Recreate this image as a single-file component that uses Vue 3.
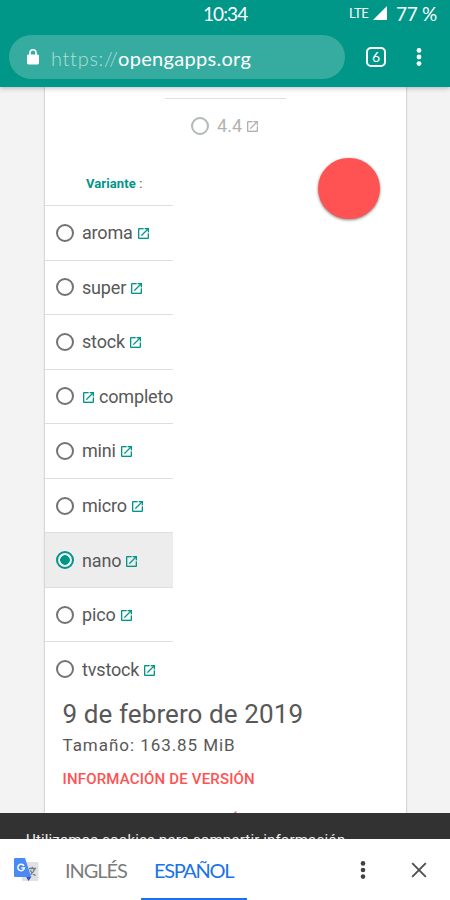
<script setup>
import { h } from 'vue'

const variants = [
  { name: 'aroma' },
  { name: 'super' },
  { name: 'stock' },
  { name: 'completo', iconFirst: true },
  { name: 'mini' },
  { name: 'micro' },
  { name: 'nano', selected: true },
  { name: 'pico' },
  { name: 'tvstock' },
]

const OpenIcon = () =>
  h('svg', { viewBox: '3 3 18 18', width: 11, height: 11, fill: 'currentColor', stroke: 'currentColor', 'stroke-width': 0.3 }, [
    h('path', {
      d: 'M19 19H5V5h7V3H5a2 2 0 0 0-2 2v14a2 2 0 0 0 2 2h14c1.1 0 2-.9 2-2v-7h-2v7zM14 3v2h3.59l-9.83 9.83 1.41 1.41L19 6.41V10h2V3h-7z',
    }),
  ])
</script>

<template>
  <div class="screen">
    <header class="browser">
      <div class="status">
        <span class="clock">10:34</span>
        <span class="lte">LTE</span>
        <svg class="signal" width="14" height="14" viewBox="0 0 14 14"><path d="M14 0v14H0z" fill="#fff" /></svg>
        <span class="battery">77 %</span>
      </div>
      <div class="toolbar">
        <div class="address">
          <svg class="lock" width="12" height="16" viewBox="0 0 12 16">
            <rect x="0" y="5.4" width="12" height="10" rx="1.4" fill="#fff" />
            <path d="M3 6V3.8a3 3 0 0 1 6 0V6" fill="none" stroke="#fff" stroke-width="1.6" />
          </svg>
          <span class="scheme">https://</span><span class="host">opengapps.org</span>
        </div>
        <div class="tabs">6</div>
        <svg class="dots" width="6" height="20" viewBox="0 0 6 20" fill="#fff">
          <circle cx="3" cy="3.4" r="2.4" /><circle cx="3" cy="10" r="2.4" /><circle cx="3" cy="16.6" r="2.4" />
        </svg>
      </div>
    </header>

    <main class="page">
      <section class="card">
        <div class="android">
          <span class="radio"></span>
          <span class="version">4.4</span>
          <OpenIcon />
        </div>
        <div class="variants">
          <div class="heading"><b>Variante</b> :</div>
          <div v-for="v in variants" :key="v.name" class="row" :class="{ selected: v.selected, reversed: v.iconFirst }">
            <span class="radio"></span>
            <span class="name">{{ v.name }}</span>
            <OpenIcon class="link" />
          </div>
        </div>
        <div class="release">
          <h1>9 de febrero de 2019</h1>
          <p>Tamaño: 163.85 MiB</p>
          <a>INFORMACIÓN DE VERSIÓN</a>
          <a class="more">REGISTRO DE VALIDACIÓN</a>
        </div>
        <div class="fab"></div>
      </section>
    </main>

    <div class="cookies">Utilizamos cookies para compartir información</div>

    <footer class="translate">
      <svg class="logo" width="26" height="26" viewBox="0 0 26 26">
        <rect x="9" y="5" width="16.5" height="19" rx="1.2" fill="#dfe1e3" />
        <path d="M13 19.5h5.5L15.5 24z" fill="#3052b8" />
        <path d="M2.2 1H12l6.2 19H2.2A1.2 1.2 0 0 1 1 18.8V2.2A1.2 1.2 0 0 1 2.2 1z" fill="#4a8af4" />
        <path d="M11 8.8A3.3 3.3 0 1 0 11.4 11H8.4" fill="none" stroke="#fff" stroke-width="1.5" />
        <path d="M16 11.5h7M19.3 9.8v1.7M21.7 11.5c-.6 2.8-2.2 4.8-4.3 6.3M17.2 13.3c1 2 3.3 4.4 5.3 5.4" fill="none" stroke="#737a80" stroke-width="1.3" />
      </svg>
      <span class="lang source">INGLÉS</span>
      <span class="lang target">ESPAÑOL</span>
      <svg class="more-dots" width="6" height="20" viewBox="0 0 6 20" fill="#424242">
        <circle cx="3" cy="3.4" r="2.3" /><circle cx="3" cy="10" r="2.3" /><circle cx="3" cy="16.6" r="2.3" />
      </svg>
      <svg class="close" width="16" height="16" viewBox="0 0 16 16">
        <path d="M1.2 1.2l13.6 13.6M14.8 1.2L1.2 14.8" stroke="#505050" stroke-width="1.9" />
      </svg>
    </footer>
  </div>
</template>

<style>
body { margin: 0; overflow: hidden; }
</style>

<style scoped>
.screen {
  width: 450px;
  height: 900px;
  display: flex;
  flex-direction: column;
  overflow: hidden;
  background: #f3f3f3;
  color: #585858;
  font-family: Roboto, sans-serif;
}
svg { display: block; flex: none; }
.browser {
  position: relative;
  z-index: 1;
  flex: none;
  height: 87px;
  background: #009688;
  color: #fff;
  font-family: Lato, sans-serif;
  box-shadow: 0 1px 5px rgba(0, 0, 0, .28);
}
.status {
  height: 35px;
  display: flex;
  padding-left: 203px;
  box-sizing: border-box;
  white-space: nowrap;
}
.clock { width: 146px; font-size: 19px; line-height: 28px; letter-spacing: -.9px; }
.lte { width: 24px; font-size: 13px; line-height: 26px; letter-spacing: -.4px; }
.signal { margin-top: 6px; }
.battery { margin-left: 9px; font-size: 19px; line-height: 28px; letter-spacing: -.3px; }
.toolbar { display: flex; align-items: center; height: 44px; padding-left: 9px; }
.address {
  width: 336px;
  height: 44px;
  box-sizing: border-box;
  padding-left: 18px;
  display: flex;
  align-items: center;
  border-radius: 22px;
  background: #36ab9f;
  font-size: 20px;
  white-space: nowrap;
}
.lock { margin: -1px 12px 0 0; }
.scheme { width: 67px; color: #b0ded9; font-weight: 300; letter-spacing: .7px; padding-top: 2px; }
.host { padding-top: 2px; letter-spacing: .3px; }
.tabs {
  width: 20px;
  height: 20px;
  box-sizing: border-box;
  margin-left: 21px;
  border: 2px solid #fff;
  border-radius: 5px;
  font-size: 14px;
  line-height: 16px;
  text-align: center;
}
.dots { margin-left: 30px; }
.page { flex: none; height: 726px; overflow: hidden; }
.card {
  position: relative;
  width: 361px;
  height: 726px;
  margin-left: 45px;
  background: #fff;
  box-shadow: 0 0 2px rgba(0, 0, 0, .35);
  overflow: hidden;
}
.android {
  display: flex;
  align-items: center;
  width: 121px;
  height: 55px;
  box-sizing: border-box;
  margin: 11px 0 0 120px;
  padding-left: 26px;
  border-top: 1px solid #dfdfdf;
  color: #b2b2b2;
  font-size: 18px;
}
.version { margin: -2px 5px 0 8px; letter-spacing: .1px; }
.radio {
  width: 18px;
  height: 18px;
  flex: none;
  box-sizing: border-box;
  border: 2px solid #737373;
  border-radius: 50%;
}
.android .radio { border-color: #b2b8b6; }
.variants { width: 128px; }
.heading {
  height: 52px;
  line-height: 61px;
  padding-left: 41px;
  box-sizing: border-box;
  font-size: 13px;
  letter-spacing: .1px;
  color: #555;
}
.heading b { color: #009688; font-weight: 700; }
.row {
  display: flex;
  align-items: center;
  gap: 5px;
  height: 54.56px;
  box-sizing: border-box;
  padding-left: 11px;
  border-top: 1px solid #dedede;
  font-size: 18px;
  letter-spacing: -.17px;
}
.row .radio { margin-right: 3px; }
.link { color: #009688; margin-top: 2px; }
.reversed .radio { margin-right: 4px; }
.reversed .link { order: 1; }
.reversed .name { order: 2; }
.selected { background: #ededed; }
.selected .radio {
  border-color: #009688;
  background: radial-gradient(circle, #009688 4.5px, transparent 5px);
}
.release { display: flex; flex-direction: column; padding-left: 17.5px; white-space: nowrap; }
h1 { margin: 1px 0 0; font-size: 26px; line-height: 34px; font-weight: 400; letter-spacing: .1px; }
p { margin: 0; font-size: 17px; line-height: 28px; letter-spacing: .95px; }
a { margin-top: 9px; font-size: 15px; line-height: 22px; letter-spacing: .17px; font-weight: 500; color: #ff5252; }
.more { margin-top: 19px; letter-spacing: .3px; }
.fab {
  position: absolute;
  left: 273px;
  top: 70.5px;
  width: 61.5px;
  height: 61.5px;
  border-radius: 50%;
  background: #ff5252;
  box-shadow: 0 1px 3px rgba(0, 0, 0, .5);
}
.cookies {
  flex: none;
  height: 26px;
  overflow: hidden;
  padding: 17px 0 0 26px;
  box-sizing: border-box;
  background: #323232;
  color: #eee;
  font-size: 15px;
  line-height: 20px;
  letter-spacing: .15px;
  white-space: nowrap;
}
.translate {
  flex: none;
  display: flex;
  align-items: center;
  height: 61px;
  padding-left: 13px;
  background: #fff;
  font-family: Lato, sans-serif;
  font-size: 20px;
  white-space: nowrap;
}
.lang { height: 61px; box-sizing: border-box; line-height: 63px; letter-spacing: -1.05px; }
.source { width: 76px; margin-left: 26px; color: #7c7c7c; }
.target { width: 106px; padding-left: 13px; color: #1a73e8; border-bottom: 2px solid #1a73e8; letter-spacing: -1.35px; }
.more-dots { margin-left: 112.5px; }
.close { margin-left: 45.5px; }
</style>
